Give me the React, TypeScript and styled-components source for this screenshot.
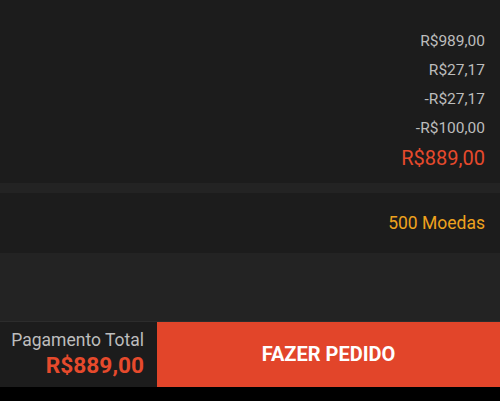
import React from "react";
import styled, { createGlobalStyle } from "styled-components";

const Global = createGlobalStyle`
  html, body { margin: 0; padding: 0; background: #000; }
  body { font-family: Roboto, "Noto Sans", Arial, sans-serif; }
  * { box-sizing: border-box; }
`;

const Screen = styled.div`
  width: 500px;
  height: 401px;
  display: flex;
  flex-direction: column;
  background: #232323;
  overflow: hidden;
`;

const Panel = styled.section<{ $pt?: number; $pb?: number }>`
  background: #1c1c1c;
  padding: ${(p) => p.$pt ?? 0}px 15px ${(p) => p.$pb ?? 0}px;
  display: flex;
  flex-direction: column;
  align-items: flex-end;
`;

const Divider = styled.div<{ $h: number }>`
  height: ${(p) => p.$h}px;
  flex: 0 0 auto;
`;

const Spacer = styled.div`
  flex: 1;
`;

const Value = styled.div<{ $tone: "muted" | "red" | "gold"; $size: number; $h: number }>`
  height: ${(p) => p.$h}px;
  line-height: ${(p) => p.$h}px;
  font-size: ${(p) => p.$size}px;
  color: ${(p) =>
    p.$tone === "red" ? "#e64a2c" : p.$tone === "gold" ? "#eea21e" : "#bcbcbc"};
`;

const Footer = styled.footer`
  height: 66px;
  border-top: 1px solid #2c2c2c;
  display: flex;
  background: #1c1c1c;
`;

const TotalBox = styled.div`
  width: 157px;
  padding: 6px 13px 0 0;
  display: flex;
  flex-direction: column;
  align-items: flex-end;
`;

const TotalLabel = styled.div`
  font-size: 17.5px;
  line-height: 24px;
  color: #bdbdbd;
`;

const TotalValue = styled.div`
  font-size: 22.7px;
  line-height: 28px;
  font-weight: 700;
  color: #e64a2c;
`;

const OrderButton = styled.button`
  flex: 1;
  border: none;
  margin: 0;
  background: #e2452a;
  color: #fff;
  font-family: Roboto, "Noto Sans", Arial, sans-serif;
  font-size: 20px;
  font-weight: 700;
  display: flex;
  align-items: center;
  justify-content: center;
  padding: 0 0 2px;
  cursor: pointer;
`;

const NavBar = styled.div`
  height: 14px;
  background: #000;
`;

const rows = ["R$989,00", "R$27,17", "-R$27,17", "-R$100,00"];

export default function App() {
  return (
    <>
      <Global />
      <Screen>
        <Panel $pt={27} $pb={10}>
          {rows.map((r) => (
            <Value key={r} $tone="muted" $size={15.5} $h={29}>
              {r}
            </Value>
          ))}
          <Value $tone="red" $size={20} $h={30}>
            R$889,00
          </Value>
        </Panel>
        <Divider $h={10} />
        <Panel $pt={0} $pb={0}>
          <Value $tone="gold" $size={17.5} $h={60}>
            500 Moedas
          </Value>
        </Panel>
        <Spacer />
        <Footer>
          <TotalBox>
            <TotalLabel>Pagamento Total</TotalLabel>
            <TotalValue>R$889,00</TotalValue>
          </TotalBox>
          <OrderButton>FAZER PEDIDO</OrderButton>
        </Footer>
        <NavBar />
      </Screen>
    </>
  );
}
